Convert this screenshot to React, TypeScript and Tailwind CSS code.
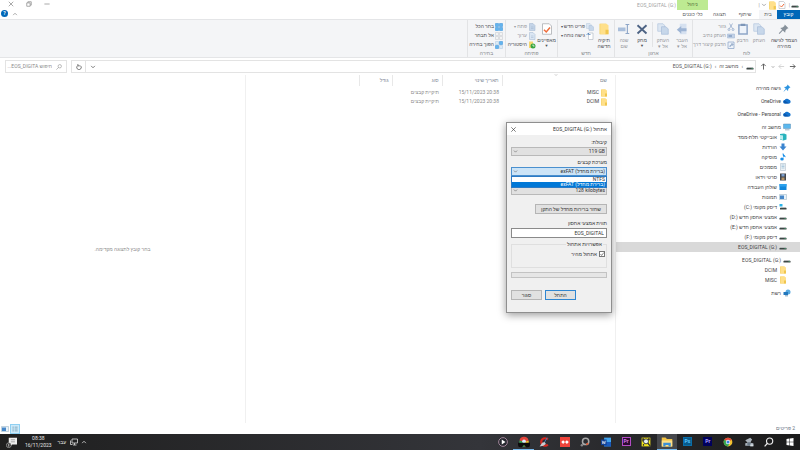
import type { ReactNode } from 'react'
import clsx from 'clsx'

type IconProps = { children: ReactNode; className?: string; box?: string }

const Svg = ({ children, className = 'size-2', box = '0 0 16 16' }: IconProps) => (
    <svg viewBox={box} className={clsx('shrink-0', className)} fill="none" aria-hidden="true">{children}</svg>
)

const Folder = ({ className = 'size-2' }: { className?: string }) => (
    <Svg className={className}>
        <path d="M2 1h9v14H2z" fill="#f3cf62" />
        <path d="M3 1h8l3 2v12H3z" fill="#ffe08a" />
        <path d="M10 9h4v6h-4z" fill="#f0c64f" />
    </Svg>
)
const Drive = () => (
    <Svg>
        <path d="M2 8h12l1 3H1z" fill="#b9bcbd" />
        <path d="M1 10h14v3H1z" fill="#3d4745" />
        <path d="M11 11h3v1h-3z" fill="#4fd08a" />
    </Svg>
)
const SystemDrive = () => (
    <Svg>
        <path d="M1 2h6v5H1z" fill="#2cb5ea" />
        <path d="M3 8h11l1 3H2z" fill="#b9bcbd" />
        <path d="M2 10h13v3H2z" fill="#3d4745" />
    </Svg>
)
const Cloud = () => (
    <Svg>
        <path d="M4 13a3.500 3.500 0 0 1-.5-7A5 5 0 0 1 12 5.500 4 4 0 0 1 13 13z" fill="#1473cf" />
        <path d="M4 13a3.500 3.500 0 0 1-1-6.500l9 6.500z" fill="#0a57ad" />
    </Svg>
)
const Pin = () => (
    <Svg><path d="M9 1l6 6-2 .5-2.500 2.500-.5 4-3.500-3.500L2 15l-1 0 4.500-5.500L2 6l4-.5L8.500 3z" fill="#2b93e0" /></Svg>
)
const Monitor = () => (
    <Svg>
        <path d="M1 2h14v9H1z" fill="#5bb8ee" stroke="#5b8fb5" />
        <path d="M4 13h9v1.500H4z" fill="#7695ad" />
    </Svg>
)
const Objects = () => (
    <Svg>
        <path d="M2 2l8-1 5 2v10l-6 2-7-2z" fill="#27b3bd" />
        <path d="M2 4l6 1v9l-6-2z" fill="#bcecee" />
    </Svg>
)
const Download = () => <Svg><path d="M5 1h6v6h4l-7 8-7-8h4z" fill="#3a84cf" /></Svg>
const Music = () => (
    <Svg>
        <path d="M7 1l2 0c0 3 5 4 4 8-1-2-3-2-4-2v5z" fill="#168ee8" />
        <ellipse cx="6" cy="12" rx="3.500" ry="3" fill="#168ee8" />
    </Svg>
)
const Docs = () => (
    <Svg>
        <path d="M3 1h10v14H3z" fill="#eef3f6" stroke="#a2b5c2" />
        <path d="M5 4h6M5 7h6M5 10h6" stroke="#6fa1c7" />
    </Svg>
)
const Video = () => (
    <Svg>
        <path d="M2 1h12v14H2z" fill="#42474f" />
        <path d="M5 2h6v5H5z" fill="#7c9fcd" />
        <path d="M5 9h6v5H5z" fill="#b59466" />
    </Svg>
)
const Desktop = () => <Svg><path d="M1 2h14v12H1z" fill="#1287db" /><path d="M1 2h14v5H1z" fill="#2ca2ee" /></Svg>
const Pictures = () => (
    <Svg>
        <path d="M1 3h14v10H1z" fill="#e7f2fa" stroke="#93acbd" />
        <path d="M2 5h8v7H2z" fill="#4687c9" />
    </Svg>
)
const Network = () => (
    <Svg>
        <circle cx="10" cy="6" r="5" fill="#58a9e0" />
        <path d="M1 6h9v6H1z" fill="#2277bd" />
        <path d="M4 13h6v1.500H4z" fill="#4d7ca1" />
    </Svg>
)
const Chevron = ({ className, up }: { className?: string; up?: boolean }) => (
    <Svg className={className ?? 'size-1.5'}>
        <path d={up ? 'M3 11l5-5 5 5' : 'M3 5l5 5 5-5'} stroke="currentColor" strokeWidth="2" />
    </Svg>
)
const Arrow = ({ d }: { d: string }) => <Svg className="size-[7px]"><path d={d} stroke="currentColor" strokeWidth="2" /></Svg>

const DriveName = ({ name, letter }: { name: string; letter: string }) => (
    <>{name} <bdi dir="ltr">({letter}:)</bdi></>
)

/* ---------- ribbon ---------- */

type BigProps = { icon: ReactNode; lines: string[]; width: string; off?: boolean; menu?: boolean }

const BigButton = ({ icon, lines, width, off, menu }: BigProps) => (
    <button className={clsx('flex flex-col items-center pt-[3px] leading-[6px]', width, off ? 'text-[#97999d]' : 'text-[#4c4f53]')}>
        {icon}
        <span className="mt-0.5 whitespace-nowrap">{lines.map(l => <span key={l} className="block">{l}</span>)}</span>
        {menu && <span className="text-[4px] leading-[5px]">▼</span>}
    </button>
)

const SmallButton = ({ icon, label, off, menu }: { icon: ReactNode; label: string; off?: boolean; menu?: boolean }) => (
    <button className={clsx('flex h-[9px] items-center gap-px whitespace-nowrap', off ? 'text-[#97999d]' : 'text-[#4c4f53]')}>
        {icon}
        <span>{label}</span>
        {menu && <span className="text-[4px]">▾</span>}
    </button>
)

const Group = ({ label, width, children }: { label: string; width: string; children: ReactNode }) => (
    <div className={clsx('flex flex-col border-l border-[#e2e3e5]', width)}>
        <div className="flex h-[29px]">{children}</div>
        <div className="text-center leading-2 text-[#85888c]">{label}</div>
    </div>
)

const Stack = ({ children }: { children: ReactNode }) => <div className="flex flex-col pt-0.5">{children}</div>

const Page = ({ fill = '#dbe6f3' }: { fill?: string }) => (
    <Svg><path d="M3 1h7l4 4v10H3z" fill={fill} stroke="#9fb4cf" /><path d="M6 8h5M6 11h5" stroke="#9fb4cf" /></Svg>
)
const Copies = ({ className = 'size-3' }: { className?: string }) => (
    <Svg className={className}>
        <path d="M1 1h7l2 2v8H1z" fill="#dce6f2" stroke="#b6c8df" />
        <path d="M6 5h6l3 3v7H6z" fill="#c7d7ea" stroke="#a9bed9" />
    </Svg>
)
const Grid = ({ fill, stroke }: { fill: string; stroke: string }) => (
    <Svg><path d="M1 1h6v6H1zM9 1h6v6H9zM1 9h6v6H1zM9 9h6v6H9z" fill={fill} stroke={stroke} /></Svg>
)
const Check = ({ className = 'size-3' }: { className?: string }) => (
    <Svg className={className}>
        <path d="M2 1h9l3 3v11H2z" fill="#fff" stroke="#a5a9ad" />
        <path d="M4 9l3 3 5-6" stroke="#ef6d3b" strokeWidth="2" />
    </Svg>
)

const Ribbon = () => (
    <div className="flex border-y border-[#e4e5e7] bg-[#f4f5f7]">
        <Group label="לוח" width="w-[108px]">
            <BigButton width="w-8" lines={['הצמד לגישה', 'מהירה']} icon={
                <Svg className="size-3"><path d="M9 2l5 5-2 .5-2 2.500-.5 3L6.500 10 2 14.500l-1-1L5.500 9 3 6.500l3-.5L8.500 4z" fill="#86909a" /></Svg>
            } />
            <BigButton off width="w-[18px]" lines={['העתק']} icon={<Copies />} />
            <BigButton off width="w-[15px]" lines={['הדבק']} icon={
                <Svg className="size-3">
                    <path d="M2.500 2.500h11v12h-11z" fill="#eef3fa" stroke="#8ea6c8" strokeWidth="2" />
                    <path d="M5 1h6v3H5z" fill="#7d96b8" />
                </Svg>
            } />
            <Stack>
                <SmallButton off label="גזור" icon={
                    <Svg><path d="M5 1l6 10M11 1L5 11" stroke="#8ea6c8" strokeWidth="1.500" /><circle cx="4" cy="13" r="2" stroke="#8ea6c8" strokeWidth="1.500" /><circle cx="12" cy="13" r="2" stroke="#8ea6c8" strokeWidth="1.500" /></Svg>
                } />
                <SmallButton off label="העתק נתיב" icon={<Svg><path d="M1 4h14v8H1z" fill="#c3d2e8" stroke="#9ab0ce" /><path d="M3 8h7" stroke="#6785ad" strokeWidth="2" /></Svg>} />
                <SmallButton off label="הדבק קיצור דרך" icon={<Svg><path d="M2 2h12v13H2z" fill="#eef3fa" stroke="#8ea6c8" strokeWidth="1.500" /><path d="M6 12c0-4 2-5 5-5M9 4l3 3-3 3" stroke="#6785ad" strokeWidth="1.500" /></Svg>} />
            </Stack>
        </Group>
        <Group label="ארגון" width="w-[78px]">
            <BigButton off width="w-5" lines={['העבר', 'אל ▾']} icon={<Svg className="size-3"><path d="M5 1h9v14H5z" fill="#d6e1f0" /><path d="M1 9l6-5v3h7v4H7v3z" fill="#9db4d4" /></Svg>} />
            <BigButton off width="w-[18px]" lines={['העתק', 'אל ▾']} icon={<Copies />} />
            <div className="mx-px my-0.5 border-l border-[#e2e3e5]" />
            <BigButton width="w-[18px]" lines={['מחק']} menu icon={<Svg className="size-3"><path d="M2 3l12 11M14 3L2 14" stroke="#4d6384" strokeWidth="2.500" /></Svg>} />
            <BigButton off width="w-[18px]" lines={['שנה', 'שם']} icon={<Svg className="size-3"><path d="M0 6h10v5H0z" fill="#a9bedb" /><path d="M10 2h5M12.500 2v12M10 14h5" stroke="#8ea6c8" strokeWidth="1.500" /></Svg>} />
        </Group>
        <Group label="חדש" width="w-[57px]">
            <BigButton width="w-5" lines={['תיקיה', 'חדשה']} icon={<Folder className="size-3" />} />
            <Stack>
                <SmallButton menu label="פריט חדש" icon={<Copies className="size-2" />} />
                <SmallButton menu label="גישה נוחה" icon={<Svg><path d="M5 2h9v13H5z" fill="#fff" stroke="#9aa5b3" /><path d="M1 6l4-4v3h4" stroke="#4a7fbb" strokeWidth="1.500" /></Svg>} />
            </Stack>
        </Group>
        <Group label="פתיחה" width="w-[52px]">
            <BigButton width="w-[21px]" lines={['מאפיינים']} menu icon={<Check />} />
            <Stack>
                <SmallButton off menu label="פתח" icon={<Page fill="#c4d4e8" />} />
                <SmallButton off label="ערוך" icon={<Page />} />
                <SmallButton label="היסטוריה" icon={<Svg><path d="M2 1h8v13H2z" fill="#f5d76e" /><circle cx="10" cy="10" r="5" fill="#3aa640" /><path d="M10 7v3h3" stroke="#fff" strokeWidth="1.500" /></Svg>} />
            </Stack>
        </Group>
        <Group label="בחירה" width="w-[38px]">
            <div className="pr-0.5">
                <Stack>
                    <SmallButton label="בחר הכל" icon={<Grid fill="#62b4ef" stroke="#2f8fd8" />} />
                    <SmallButton label="אל תבחר" icon={<Grid fill="#f2f3f4" stroke="#c3c7cb" />} />
                    <SmallButton label="הפוך בחירה" icon={<Svg><path d="M1 9h6v6H1zM9 1h6v6H9z" fill="#62b4ef" stroke="#2f8fd8" /><path d="M1 1h6v6H1zM9 9h6v6H9z" fill="#dbeaf6" stroke="#a9c7e0" /></Svg>} />
                </Stack>
            </div>
        </Group>
    </div>
)

const TitleBar = () => (
    <header className="flex justify-between">
        <div className="flex">
            <div>
                <div className="flex h-2.5 items-center gap-px pr-px text-[#8d8d8d]">
                    <Drive /><span className="pl-0.5">|</span><Check className="size-2" /><Folder className="size-[9px]" /><Chevron className="size-1.5" /><span>|</span>
                </div>
                <nav className="flex h-[9px] text-[#5b5b5b]">
                    <button className="w-[23px] bg-[#0067b8] text-white">קובץ</button>
                    <button className="w-[18px] bg-[#f4f5f7]">בית</button>
                    <button className="w-7">שיתוף</button>
                    <button className="w-[23px] whitespace-nowrap">תצוגה</button>
                </nav>
            </div>
            <div className="w-[31px] text-center">
                <div className="h-2.5 bg-[#bdea92] leading-2 text-[#4f6d38]">ניהול</div>
                <button className="h-[9px] whitespace-nowrap text-[#5b5b5b]">כלי כוננים</button>
            </div>
            <h1 className="h-2.5 pr-px leading-[10px] text-[#a3a3a3]"><bdi dir="ltr">EOS_DIGITAL (G:)</bdi></h1>
        </div>
        <div className="pl-2">
            <div className="flex h-2 items-center gap-3 text-[#8d8d8d]">
                <button aria-label="מזער"><Svg className="size-1.5"><path d="M1 8h14" stroke="currentColor" strokeWidth="2" /></Svg></button>
                <button aria-label="שחזר"><Svg className="size-1.5"><path d="M2 5h9v9H2zM5 5V2h9v9h-3" stroke="currentColor" strokeWidth="2" /></Svg></button>
                <button aria-label="סגור"><Svg className="size-1.5"><path d="M2 2l12 12M14 2L2 14" stroke="currentColor" strokeWidth="2" /></Svg></button>
            </div>
            <div className="-ml-2 flex h-[11px] items-center justify-end gap-1 pl-px text-[#8d8d8d]">
                <Chevron up />
                <button aria-label="עזרה" className="size-[7px] rounded-full bg-[#0067b8] text-center font-bold leading-[7px] text-white">?</button>
            </div>
        </div>
    </header>
)

const AddressBar = () => (
    <div className="flex items-center gap-1 bg-white py-0.5 pr-1 pl-[5px] text-[#555]">
        <div className="flex w-9 items-center justify-between">
            <button aria-label="אחורה"><Arrow d="M2 8h12M9 3l5 5-5 5" /></button>
            <button aria-label="קדימה" className="text-[#cfcfcf]"><Arrow d="M14 8H2M7 3L2 8l5 5" /></button>
            <Chevron className="size-1" />
            <button aria-label="למעלה"><Arrow d="M8 15V2M3 7l5-5 5 5" /></button>
        </div>
        <div className="flex h-[13px] flex-1 items-center border border-[#e3e3e3]">
            <div className="flex flex-1 items-center gap-[3px] pr-px">
                <Drive /><span>›</span><span>מחשב זה</span><span>›</span><bdi dir="ltr">EOS_DIGITAL (G:)</bdi>
            </div>
            <Chevron />
            <button aria-label="רענן" className="mr-1 flex h-full w-3.5 items-center justify-center border-r border-[#e3e3e3]">
                <Svg className="size-1.5"><path d="M5 4a6 6 0 1 0 6 0M5 0v5h5" stroke="currentColor" strokeWidth="2" /></Svg>
            </button>
        </div>
        <label className="flex h-[13px] w-[62px] items-center gap-1 border border-[#e3e3e3] pr-1 text-[#8b8b8b]">
            <Svg className="size-1.5"><circle cx="10" cy="6" r="4.500" stroke="currentColor" strokeWidth="1.500" /><path d="M7 9l-6 6" stroke="currentColor" strokeWidth="1.500" /></Svg>
            <input aria-label="חיפוש" placeholder="חיפוש EOS_DIGITA..." className="w-full min-w-0 placeholder:text-[#8b8b8b] placeholder:opacity-100" />
        </label>
    </div>
)

/* ---------- navigation pane ---------- */

type NavItem = { label: ReactNode; icon: ReactNode; selected?: boolean }

const navGroups: { head: NavItem; items: NavItem[] }[] = [
    { head: { label: 'גישה מהירה', icon: <Pin /> }, items: [] },
    { head: { label: 'OneDrive', icon: <Cloud /> }, items: [] },
    { head: { label: 'OneDrive - Personal', icon: <Cloud /> }, items: [] },
    {
        head: { label: 'מחשב זה', icon: <Monitor /> },
        items: [
            { label: 'אובייקטי תלת-ממד', icon: <Objects /> },
            { label: 'הורדות', icon: <Download /> },
            { label: 'מוסיקה', icon: <Music /> },
            { label: 'מסמכים', icon: <Docs /> },
            { label: 'סרטי וידאו', icon: <Video /> },
            { label: 'שולחן העבודה', icon: <Desktop /> },
            { label: 'תמונות', icon: <Pictures /> },
            { label: <DriveName name="דיסק מקומי" letter="C" />, icon: <SystemDrive /> },
            { label: <DriveName name="אמצעי אחסון חדש" letter="D" />, icon: <Drive /> },
            { label: <DriveName name="אמצעי אחסון חדש" letter="E" />, icon: <Drive /> },
            { label: <DriveName name="דיסק מקומי" letter="F" />, icon: <Drive /> },
            { label: <bdi dir="ltr">EOS_DIGITAL (G:)</bdi>, icon: <Drive />, selected: true },
        ],
    },
    {
        head: { label: <bdi dir="ltr">EOS_DIGITAL (G:)</bdi>, icon: <Drive /> },
        items: [{ label: 'DCIM', icon: <Folder /> }, { label: 'MISC', icon: <Folder /> }],
    },
    { head: { label: 'רשת', icon: <Network /> }, items: [] },
]

const NavLink = ({ item, child }: { item: NavItem; child?: boolean }) => (
    <a href="#" className={clsx('flex h-2.5 items-center gap-0.5', child ? 'pr-[13px]' : 'pr-[9px]', item.selected && 'bg-[#d9d9d9]')}>
        {item.icon}
        <span>{item.label}</span>
    </a>
)

const NavPane = () => (
    <nav className="flex w-[184px] flex-col gap-[3px] pt-2 text-[#444]">
        {navGroups.map((g, i) => (
            <div key={i}>
                <NavLink item={g.head} />
                {g.items.map((item, j) => <NavLink key={j} item={item} child />)}
            </div>
        ))}
    </nav>
)

const FileList = () => (
    <div className="relative flex-1 border-x border-[#f0f0f0]">
        <div className="absolute -top-0.5 right-[57px] text-[#999]"><Chevron className="size-1" /></div>
        <table className="w-full table-fixed text-right text-[#8a8a8a]">
            <colgroup>
                <col className="w-[113px]" /><col className="w-[60px]" /><col className="w-[50px]" /><col className="w-[33px]" /><col />
            </colgroup>
            <thead>
                <tr className="h-[11px] text-[#7e8896]">
                    <th className="border-l border-[#e8e8e8] pr-2 font-normal">שם</th>
                    <th className="border-l border-[#e8e8e8] pr-[3px] font-normal">תאריך שינוי</th>
                    <th className="border-l border-[#e8e8e8] pr-[3px] font-normal">סוג</th>
                    <th className="border-l border-[#e8e8e8] pr-[3px] font-normal">גודל</th>
                    <th />
                </tr>
                <tr className="h-0.5"><th colSpan={5} /></tr>
            </thead>
            <tbody>
                {['MISC', 'DCIM'].map(name => (
                    <tr key={name} className="h-[9px]">
                        <td className="pr-[7px]"><div className="flex items-center gap-px text-[#444]"><Folder />{name}</div></td>
                        <td className="pr-[3px]"><bdi dir="ltr">15/11/2023 20:38</bdi></td>
                        <td className="pr-[3px]">תיקיית קבצים</td>
                        <td /><td />
                    </tr>
                ))}
            </tbody>
        </table>
    </div>
)

/* ---------- format dialog ---------- */

const Combo = ({ id, value, open }: { id: string; value: string; open?: boolean }) => (
    <div className="relative">
        <select id={id} aria-label={id} className={clsx('block h-[9px] w-full appearance-none border px-px leading-[7px] text-[#333]',
            open ? 'border-[#4a90cf] bg-[#cce4f7]' : 'border-[#b9b9b9] bg-[#e1e1e1]')}>
            <option>{value}</option>
        </select>
        <span className="pointer-events-none absolute top-0.5 left-0.5 text-[#666]"><Chevron className="size-[5px]" /></span>
        {open && (
            <ul className="absolute inset-x-0 top-full z-10 border border-[#2c7ac4] bg-white leading-[5px]">
                <li className="pr-px">NTFS</li>
                <li className="bg-[#0078d7] pr-px text-white">(ברירת מחדל) exFAT</li>
            </ul>
        )}
    </div>
)

const FormatDialog = () => (
    <section role="dialog" aria-label="אתחול" className="absolute top-[122px] right-[188px] w-[106px] border border-[#8f8f8f] bg-[#f0f0f0] text-[#333] shadow-[0_2px_8px_rgba(0,0,0,0.4)]">
        <div className="flex h-3 items-center justify-between bg-white px-1">
            <h2>אתחול <bdi dir="ltr">EOS_DIGITAL (G:)</bdi></h2>
            <button aria-label="סגור חלון"><Svg className="size-[5px]"><path d="M1 1l14 14M15 1L1 15" stroke="#333" strokeWidth="2" /></Svg></button>
        </div>
        <div className="px-1 pt-[3px] pb-3">
            <label htmlFor="capacity" className="block leading-[9px]">קיבולת:</label>
            <Combo id="capacity" value={'\u200e119 GB'} />
            <label htmlFor="fs" className="mt-0.5 block leading-[9px]">מערכת קבצים</label>
            <Combo id="fs" value="(ברירת מחדל) exFAT" open />
            <div className="mt-2.5"><Combo id="unit" value={'\u200e128 kilobytes'} /></div>
            <button className="mt-[9px] block h-2.5 w-[72px] border border-[#b5b5b5] bg-[#e1e1e1] leading-2 whitespace-nowrap">שחזר ברירות מחדל של התקן</button>
            <label htmlFor="volume" className="mt-1 block leading-[10px]">תווית אמצעי אחסון</label>
            <input id="volume" defaultValue="EOS_DIGITAL" className="block h-2.5 w-full border border-[#8a8a8a] bg-white px-0.5" />
            <fieldset className="mt-0.5 h-7 border border-[#dfdfdf] px-px">
                <legend className="mr-0.5 px-px leading-[9px]">אפשרויות אתחול</legend>
                <label className="relative flex h-2.5 items-center gap-0.5">
                    <input type="checkbox" defaultChecked className="peer size-1.5 appearance-none border border-[#777] bg-white" />
                    <span className="pointer-events-none absolute right-0 hidden peer-checked:block">
                        <Svg className="size-1.5"><path d="M4 8l3 4 6-8" stroke="#333" strokeWidth="1.500" /></Svg>
                    </span>
                    אתחול מהיר
                </label>
            </fieldset>
            <div role="progressbar" aria-label="התקדמות" className="mt-1 h-1.5 border border-[#c3c3c3] bg-[#e6e6e6]" />
            <div className="mt-3 flex justify-end gap-[3px]">
                <button className="h-2.5 w-[31px] border border-[#2f86d1] bg-[#e1e1e1] leading-2">התחל</button>
                <button className="h-2.5 w-[31px] border border-[#b5b5b5] bg-[#e1e1e1] leading-2">סגור</button>
            </div>
        </div>
    </section>
)

/* ---------- taskbar ---------- */

const Tile = ({ text, bg, fg }: { text: string; bg: string; fg: string }) => (
    <span dir="ltr" className={clsx('flex size-[9px] items-center justify-center border text-[5px] font-bold', bg, fg)}>{text}</span>
)

const Chrome = () => (
    <Svg className="size-2.5">
        <circle cx="8" cy="8" r="7" fill="#f2c22f" />
        <path d="M8 8L2 4.500a7 7 0 0 1 12 0z" fill="#e2443a" />
        <path d="M8 8L2 4.500A7 7 0 0 0 8 15l2-4z" fill="#37a654" />
        <circle cx="8" cy="8" r="3.500" fill="#fff" /><circle cx="8" cy="8" r="2.500" fill="#3c7fe0" />
    </Svg>
)

const apps: { name: string; icon: ReactNode; active?: boolean; running?: boolean }[] = [
    { name: 'התחל', icon: <Svg className="size-2"><path d="M1 2l6-1v6.500H1zM8 1l7-1v7.500H8zM1 8.500h6V15l-6-1zM8 8.500h7V16l-7-1z" fill="#fff" /></Svg> },
    { name: 'חיפוש', icon: <Svg className="size-2.5"><circle cx="9" cy="6.500" r="5" stroke="#eee" strokeWidth="1.800" /><path d="M5.500 10L1 15" stroke="#eee" strokeWidth="1.800" /></Svg> },
    { name: 'מצלמה', icon: <Svg className="size-2.5"><path d="M2 5l8-4 3 3-3 5 5 1v4H2v-4l4-1z" fill="#a9b2ba" /><circle cx="8" cy="11" r="3" fill="#6b7a88" /><path d="M10 12h5v3h-5z" fill="#d5dde3" /></Svg> },
    { name: 'Chrome', icon: <Chrome /> },
    { name: 'Premiere', icon: <Tile text="Pr" bg="border-[#00005b] bg-[#00005b]" fg="text-[#b0a4ff]" /> },
    { name: 'Photoshop', icon: <Tile text="Ps" bg="border-[#0a6ea8] bg-[#075a8c]" fg="text-[#5fc8ff]" /> },
    { name: 'סייר הקבצים', active: true, running: true, icon: <Svg className="size-3"><path d="M1 2h5l2 2h7v10H1z" fill="#f4c445" /><path d="M1 6h14v8H1z" fill="#ffe08a" /><path d="M3 9h10v5h-3v-2H6v2H3z" fill="#3b8fd6" /></Svg> },
    { name: 'חיפוש קבצים', icon: <Svg className="size-2.5"><path d="M1 1h14v14H1z" fill="#f3e51c" /><path d="M2 2h3v5H2zM11 2h3v3h-3z" fill="#333" /><circle cx="8" cy="7" r="4" fill="#e8f0f2" stroke="#333" strokeWidth="1.500" /><path d="M11 10l4 5M4 11v3" stroke="#333" strokeWidth="2" /></Svg> },
    { name: 'Premiere CC', icon: <Tile text="Pr" bg="border-[#b24bc4] bg-[#2b0a33]" fg="text-[#d77be8]" /> },
    { name: 'Word', icon: <Svg className="size-2.5"><path d="M5 1h11v14H5z" fill="#41a5ee" /><path d="M5 8h11v7H5z" fill="#185abd" /><path d="M0 4h9v9H0z" fill="#103f91" /><path d="M2 6l1 5 1.500-4L6 11l1-5" stroke="#fff" /></Svg> },
    { name: 'DaVinci', icon: <Svg className="size-2.5"><circle cx="9" cy="7" r="5" stroke="#a8a8a8" strokeWidth="2.500" /><path d="M13 10a5 5 0 0 1-3 2" stroke="#e4572e" strokeWidth="2.500" /><circle cx="3" cy="13" r="2" fill="#888" /></Svg> },
    { name: 'AnyDesk', icon: <Svg className="size-2.5"><path d="M0 0h16v16H0z" fill="#ef443b" /><path d="M2 8l3-3 3 3-3 3zM8 8l3-3 3 3-3 3z" fill="#fff" /></Svg> },
    { name: 'CCleaner', icon: <Svg className="size-2.5"><path d="M14 4a6 6 0 1 0 0 8" stroke="#d8281f" strokeWidth="3.500" /><path d="M9 8l-4 1-4 6 6-1 4-3z" fill="#c9cdd1" /><path d="M13 1l-4 7" stroke="#3f7fc0" strokeWidth="1.500" /></Svg> },
    { name: 'Chrome אישי', running: true, icon: <Svg className="size-3"><path d="M8 1a6 6 0 0 1 6 5L8 8 2 6a6 6 0 0 1 6-5z" fill="#e2443a" /><path d="M2 6l6 2 1 6a6 6 0 0 1-7-8z" fill="#37a654" /><path d="M14 6L8 8l1 6a6 6 0 0 0 5-8z" fill="#f2c22f" /><circle cx="8" cy="7" r="2.500" fill="#dcecff" /><path d="M0 9h16v3a3 3 0 0 1-3 3h-2l-3-3-3 3H3a3 3 0 0 1-3-3z" fill="#0c0c0c" /></Svg> },
    { name: 'נגן', icon: <Svg className="size-2.5"><circle cx="8" cy="8" r="7" fill="#25272e" stroke="#a98ba0" strokeWidth="1.500" /><path d="M6 4l6 4-6 4z" fill="#fff" /></Svg> },
]

const Taskbar = () => (
    <footer className="flex h-4 items-stretch justify-between bg-linear-to-l from-[#1b1b1b] via-[#34353a] via-40% to-[#1f1f1f] text-[#e6e6e6]">
        <div className="flex w-[307px]">
            {apps.map(app => (
                <button key={app.name} aria-label={app.name} className={clsx('flex flex-1 items-center justify-center border-b',
                    app.active && 'bg-[#46484c]', app.running ? 'border-[#76b9ed]' : 'border-transparent')}>
                    {app.icon}
                </button>
            ))}
        </div>
        <div className="flex items-center gap-1 pl-1.5">
            <div className="flex items-center gap-[3px]">
                <Chevron up />
                <Svg className="size-2"><path d="M4 2h11v8H4zM9 10v4M6 14h7M1 5v8h4" stroke="currentColor" strokeWidth="1.500" /></Svg>
            </div>
            <span>עבר</span>
            <div className="flex items-center gap-2 pr-0.5">
                <div className="text-center leading-[7px]"><div>08:38</div><div>16/11/2023</div></div>
                <Svg className="size-[11px]"><path d="M4 1h12v10H9l-3 3v-3H4z" fill="#eee" /><path d="M7 4h6M7 7h6" stroke="#888" /><circle cx="4" cy="12" r="3.500" fill="#2b2b2b" stroke="#aaa" /><path d="M4 10v4" stroke="#fff" /></Svg>
            </div>
        </div>
    </footer>
)

const App = () => {
    return <div dir="rtl" className="relative flex min-h-screen flex-col bg-white font-['Roboto','Liberation_Sans',sans-serif] text-[5px] leading-[7px]">
        <TitleBar />
        <Ribbon />
        <AddressBar />
        <main className="flex flex-1">
            <NavPane />
            <FileList />
            <div className="flex w-[245px] items-center justify-center text-[#8c8c8c]">בחר קובץ לתצוגה מקדימה.</div>
        </main>
        <div className="flex h-[11px] items-center justify-between pr-[5px] pl-px text-[#66727f]">
            <span>2 פריטים</span>
            <div className="flex items-center gap-px">
                <button aria-label="פרטים" className="flex size-2.5 items-center justify-center border border-[#8fd0f2] bg-[#cdeafa]">
                    <Svg className="size-1.5"><path d="M1 3h4M7 3h8M1 8h4M7 8h8M1 13h4M7 13h8" stroke="#7295ab" strokeWidth="2" /></Svg>
                </button>
                <button aria-label="סמלים גדולים"><Pictures /></button>
            </div>
        </div>
        <Taskbar />
        <FormatDialog />
    </div>
}

export default App
